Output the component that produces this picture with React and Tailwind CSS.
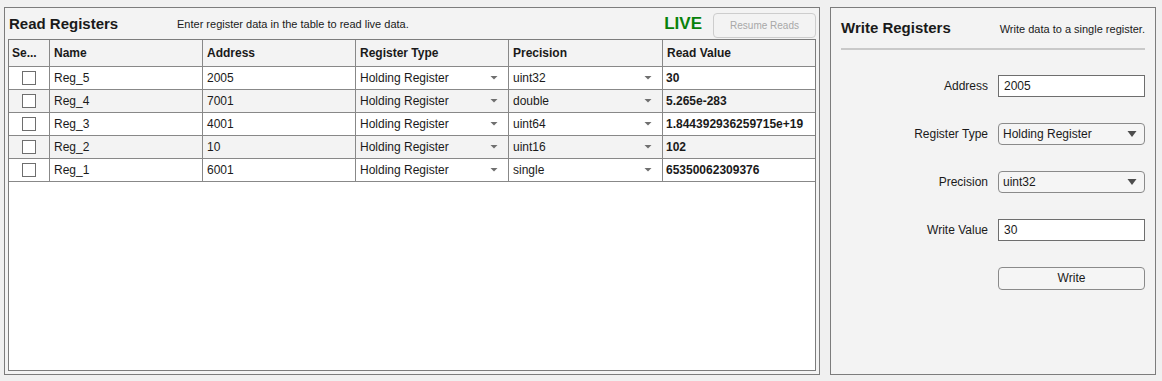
import React from "react";

const rows = [
  { name: "Reg_5", addr: "2005", type: "Holding Register", prec: "uint32", val: "30" },
  { name: "Reg_4", addr: "7001", type: "Holding Register", prec: "double", val: "5.265e-283" },
  { name: "Reg_3", addr: "4001", type: "Holding Register", prec: "uint64", val: "1.844392936259715e+19" },
  { name: "Reg_2", addr: "10", type: "Holding Register", prec: "uint16", val: "102" },
  { name: "Reg_1", addr: "6001", type: "Holding Register", prec: "single", val: "65350062309376" },
];

const font = { fontFamily: '"Liberation Sans", Arial, sans-serif' };

function SmallArrow() {
  return (
    <svg width="8" height="4" viewBox="0 0 8 4" className="shrink-0">
      <path d="M0.5 0 L7.5 0 L4 3.5 Z" fill="#6f6f6f" />
    </svg>
  );
}

function BigArrow() {
  return (
    <svg width="10" height="6" viewBox="0 0 10 6" className="shrink-0">
      <path d="M0.5 0 L9.5 0 L5 6 Z" fill="#4d4d4d" />
    </svg>
  );
}

function Cell({ w, children, last, className = "" }) {
  return (
    <div
      className={`h-full flex items-center shrink-0 ${last ? "" : "border-r border-[#888888]"} ${className}`}
      style={{ width: w }}
    >
      {children}
    </div>
  );
}

const widths = [41, 153, 153, 153, 154, 152];

export default function App() {
  return (
    <div
      className="w-[1162px] h-[381px] bg-[#f0f0f0] flex gap-[10px] pl-[4px] pt-[7px] text-[#1a1a1a]"
      style={font}
    >
      {/* Left panel */}
      <div className="w-[816px] h-[368px] border border-[#7c7c7c] bg-[#f3f3f3] flex flex-col px-[3px] pb-[3px]">
        <div className="h-[31px] flex items-center">
          <div className="pl-[1px] text-[15px] font-bold w-[169px] pt-[1px]">Read Registers</div>
          <div className="text-[11px] pt-[1px]">Enter register data in the table to read live data.</div>
          <div className="ml-auto text-[17px] font-bold text-[#08820a] mr-[11px] pt-[1px]">LIVE</div>
          <div className="w-[103px] h-[25px] mt-[3px] border border-[#cdcdcd] rounded-[4px] flex items-center justify-center text-[10px] text-[#a8a8a8]">
            Resume Reads
          </div>
        </div>
        <div className="flex-1 border border-[#7c7c7c] bg-white flex flex-col text-[12px]">
          <div className="h-[27px] flex border-b border-[#888888] bg-[#f3f3f3] font-bold">
            <Cell w={widths[0]} className="pl-[3px]">Se...</Cell>
            <Cell w={widths[1]} className="pl-[4px]">Name</Cell>
            <Cell w={widths[2]} className="pl-[4px]">Address</Cell>
            <Cell w={widths[3]} className="pl-[4px]">Register Type</Cell>
            <Cell w={widths[4]} className="pl-[4px]">Precision</Cell>
            <Cell w={widths[5]} last className="pl-[4px]">Read Value</Cell>
          </div>
          {rows.map((r, i) => (
            <div
              key={r.name}
              className={`h-[23px] flex border-b border-[#888888] ${i % 2 === 1 ? "bg-[#f3f3f3]" : "bg-white"}`}
            >
              <Cell w={widths[0]} className="justify-center">
                <div className="w-[14px] h-[14px] border border-[#6e6e6e] bg-white" />
              </Cell>
              <Cell w={widths[1]} className="pl-[4px]">{r.name}</Cell>
              <Cell w={widths[2]} className="pl-[4px]">{r.addr}</Cell>
              <Cell w={widths[3]} className="pl-[4px] pr-[10px] justify-between">
                <span>{r.type}</span>
                <SmallArrow />
              </Cell>
              <Cell w={widths[4]} className="pl-[4px] pr-[10px] justify-between">
                <span>{r.prec}</span>
                <SmallArrow />
              </Cell>
              <Cell w={widths[5]} last className="pl-[3px] font-bold">{r.val}</Cell>
            </div>
          ))}
        </div>
      </div>

      {/* Right panel */}
      <div className="w-[326px] h-[368px] border border-[#7c7c7c] bg-[#f3f3f3] flex flex-col px-[10px]">
        <div className="h-[40px] flex items-center justify-between">
          <div className="text-[15px] font-bold pt-[1px]">Write Registers</div>
          <div className="text-[11px] pt-[2px]">Write data to a single register.</div>
        </div>
        <div className="h-[2px] bg-[#c9c9c9]" />
        <div className="mt-[25px] flex flex-col gap-[26px] text-[12px]">
          <div className="flex items-center h-[22px]">
            <div className="w-[157px] text-right pr-[10px]">Address</div>
            <div className="w-[147px] h-[22px] border border-[#6e6e6e] bg-white flex items-center pl-[5px]">2005</div>
          </div>
          <div className="flex items-center h-[22px]">
            <div className="w-[157px] text-right pr-[10px]">Register Type</div>
            <div className="w-[147px] h-[22px] border border-[#8a8a8a] rounded-[4px] bg-[#f5f5f5] flex items-center justify-between pl-[4px] pr-[7px]">
              <span>Holding Register</span>
              <BigArrow />
            </div>
          </div>
          <div className="flex items-center h-[22px]">
            <div className="w-[157px] text-right pr-[10px]">Precision</div>
            <div className="w-[147px] h-[22px] border border-[#8a8a8a] rounded-[4px] bg-[#f5f5f5] flex items-center justify-between pl-[4px] pr-[7px]">
              <span>uint32</span>
              <BigArrow />
            </div>
          </div>
          <div className="flex items-center h-[22px]">
            <div className="w-[157px] text-right pr-[10px]">Write Value</div>
            <div className="w-[147px] h-[22px] border border-[#6e6e6e] bg-white flex items-center pl-[5px]">30</div>
          </div>
          <div className="flex items-center h-[22px]">
            <div className="w-[157px]" />
            <div className="w-[147px] h-[23px] border border-[#8a8a8a] rounded-[4px] bg-[#f5f5f5] flex items-center justify-center">
              Write
            </div>
          </div>
        </div>
      </div>
    </div>
  );
}
